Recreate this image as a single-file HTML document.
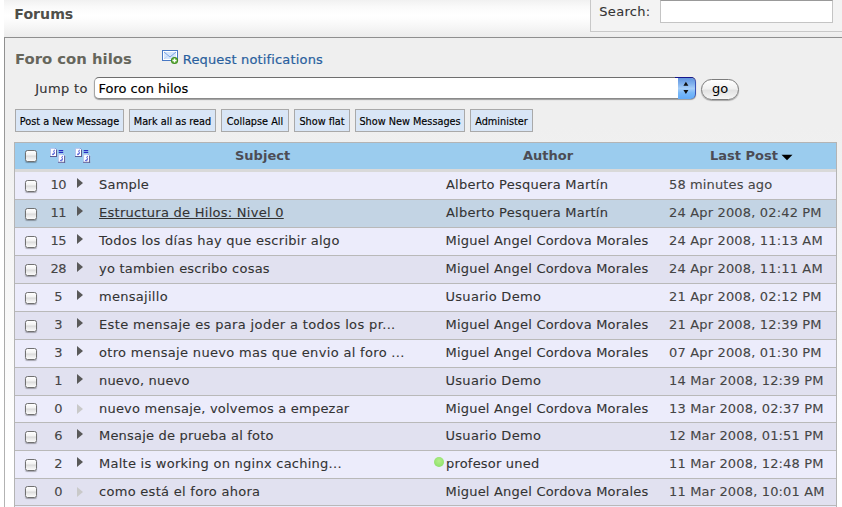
<!DOCTYPE html>
<html lang="en"><head><meta charset="utf-8"><title>Forums</title>
<style>
html,body{margin:0;padding:0}
body{width:842px;height:507px;overflow:hidden;background:#fff;position:relative;font-family:"DejaVu Sans","Liberation Sans",sans-serif;font-size:13px;color:#333;-webkit-text-stroke:.1px #333}
*{box-sizing:border-box}
.abs{position:absolute;white-space:nowrap;line-height:1}
#hdr{position:absolute;left:4px;top:0;width:838px;height:37px;background:linear-gradient(to bottom,#f1f1f1 0,#fafafa 7px,#fff 15px,#fefefe 18px,#f6f6f6 27px,#ececec 37px)}
#panel{position:absolute;left:5px;top:37px;width:900px;height:480px;background:linear-gradient(to bottom,#efefef 0,#efefef 90px,#fff 410px);border:1px solid #8f8f8f;border-left:0}#pl{position:absolute;left:4px;top:37px;width:1px;height:470px;background:linear-gradient(to bottom,#8f8f8f 0,#a6a6a6 230px,#b4b4b4 470px)}
#sbox{position:absolute;left:590px;top:-1px;width:260px;height:33px;background:#f3f3f3;border:1px solid #c8c8c8}
#sin{position:absolute;left:660px;top:0;width:173px;height:23px;background:#fff;border:1px solid #c4c4c4;border-top-color:#999}
.b{font-weight:bold;color:#4c4c55;-webkit-text-stroke:0}
.btn{position:absolute;top:109px;height:23px;background:#d9e6f6;border:1px solid #a9a9a9;font-family:"DejaVu Sans Condensed","DejaVu Sans","Liberation Sans",sans-serif;font-size:10.8px;color:#000;line-height:24px;-webkit-text-stroke:.15px #000;text-align:center;white-space:nowrap;word-spacing:0}
#sel{position:absolute;left:94px;top:77px;width:602px;height:22px;background:#fff;border:1px solid #a5a5a5;border-top-color:#6e6e6e;border-bottom-color:#8a8a8a;border-radius:5px;box-shadow:0 1px 1px rgba(0,0,0,.35)}
#sel .t{position:absolute;left:3.5px;top:3px;font-size:13px;color:#000;-webkit-text-stroke:.15px #000;line-height:15px;white-space:nowrap;word-spacing:0}
#sel .ar{position:absolute;right:-1px;top:-1px;width:21px;height:22px;border-top:1px solid #16168c;border-radius:0 5px 5px 0;overflow:hidden}#sel .ar i{position:absolute;right:0;top:-1px;width:18px;height:22px;background:linear-gradient(to bottom,#5c8fdb 0,#7fb0ec 30%,#a6cef8 52%,#78b8f8 72%,#62abf8 100%);border-right:1px solid #3a52b4;border-radius:0 5px 5px 0}
#go{-webkit-text-stroke:.05px #000;position:absolute;left:701px;top:79px;width:38px;height:21px;border:1px solid #7c7c7c;border-radius:11px;background:linear-gradient(to bottom,#fff 0,#f1f1f1 45%,#e2e2e2 55%,#f6f6f6 100%);box-shadow:0 1px 1px rgba(0,0,0,.3);font-size:13px;color:#000;text-align:center;line-height:17px}
#tbl{position:absolute;left:14px;top:142px;width:823px;height:380px;border:1px solid #b4b4b4;background:#b9b9b9}
#th{position:absolute;left:15px;top:143px;width:821px;height:26px;background:#9bccee}
#band{position:absolute;left:15px;top:169px;width:821px;height:3px;background:#d9d9d9}
.row{position:absolute;left:15px;width:821px;height:27px;white-space:nowrap}
.odd{background:#ececfb}.even{background:#e1e1f0}.sel{background:#c3d4e4}
.row span{position:absolute;top:5px;line-height:15px}
.n{left:28.3px;width:30px;text-align:center;letter-spacing:-.4px;color:#454545;-webkit-text-stroke-color:#454545}
.s{left:84px}.a{left:431px}.d{left:654px;color:#454545;-webkit-text-stroke-color:#454545}
.sl{color:#333;text-decoration:underline;text-decoration-thickness:1px;text-underline-offset:1.2px}
.cb{position:absolute;left:10px;top:7px;width:12px;height:12px;border:1px solid #717171;border-radius:2.5px;background:linear-gradient(to bottom,#fff 0,#f2f2f2 40%,#d9d9d9 50%,#e6e6e6 62%,#fbfbfb 100%);box-shadow:0 1px 1px rgba(0,0,0,.3)}
.row .cb{top:8px}
.short{height:26px}.short .cb{top:7px}.short span{top:4.5px}.short .tri{top:7.7px}
.tri{position:absolute;left:62px;top:5.7px;width:0;height:0;border-left:6.6px solid #595959;border-top:5.4px solid transparent;border-bottom:5.4px solid transparent}
.tri.off{border-left-color:#c9c9c9}
.dot{position:absolute;left:419px;top:6px;width:10px;height:10px;border-radius:5px;background:radial-gradient(circle at 50% 40%,#b4ee8c 0,#96e472 60%,#7fd862 100%)}
</style></head><body>
<div id="hdr"></div>
<div class="abs b" style="left:14.3px;top:5.8px;font-size:14.15px;line-height:16px;color:#4f4f4a">Forums</div>
<div id="sbox"></div>
<div class="abs" style="left:599.3px;top:4.3px;line-height:15px;letter-spacing:.3px">Search:</div>
<div id="sin"></div>
<div id="panel"></div><div id="pl"></div>
<div class="abs b" style="left:14.9px;top:49.6px;font-size:14.85px;line-height:18px;color:#66665c">Foro con hilos</div>
<svg class="abs" style="left:162px;top:50px" width="18" height="15" viewBox="0 0 18 15"><rect x=".5" y=".5" width="15" height="10" fill="#fff" stroke="#4878c4"/><rect x="2" y="2" width="12" height="7" fill="#d6e6fb"/><path d="M2 2 L8 7 L14 2" fill="none" stroke="#7aa2e4" stroke-width="1"/><path d="M2 9 L6 5.500 M14 9 L10 5.500" fill="none" stroke="#b4ccf2" stroke-width=".8"/><circle cx="12.500" cy="10.500" r="3.600" fill="#3e8f1e"/><circle cx="12.500" cy="10.500" r="2.500" fill="#62ad3e"/><path d="M12.500 8.500v4M10.500 10.500h4" stroke="#fff" stroke-width="1.300"/></svg>
<a class="abs" href="#" style="left:182.8px;top:51.6px;line-height:15px;color:#2a5f9e;text-decoration:none;letter-spacing:.16px;-webkit-text-stroke:.2px #2a5f9e">Request notifications</a>
<div class="abs" style="left:35.2px;top:81px;line-height:15px;letter-spacing:.33px">Jump to</div>
<div id="sel"><span class="t">Foro con hilos</span><span class="ar"><i></i><svg width="18" height="22" viewBox="0 0 18 22" style="position:absolute;left:3px;top:0"><path d="M5.4 7.8 L7.9 3.8 L10.4 7.8Z M5.4 12 L7.9 16 L10.4 12Z" fill="#111"/></svg></span></div>
<div id="go">go</div>
<div class="btn" style="left:15px;width:109px">Post a New Message</div>
<div class="btn" style="left:129px;width:87px">Mark all as read</div>
<div class="btn" style="left:221px;width:68px">Collapse All</div>
<div class="btn" style="left:294px;width:56px">Show flat</div>
<div class="btn" style="left:355px;width:110px">Show New Messages</div>
<div class="btn" style="left:470px;width:63px">Administer</div>
<div id="tbl"></div>
<div id="th"><i class="cb"></i></div>
<div id="band"></div>
<div class="abs b" style="left:235px;top:148px;font-size:13px;line-height:16px">Subject</div>
<div class="abs b" style="left:523px;top:148px;font-size:13px;line-height:16px">Author</div>
<div class="abs b" style="left:710px;top:148px;font-size:13px;line-height:16px">Last Post</div>
<svg class="abs" style="left:781px;top:154px" width="12" height="7" viewBox="0 0 12 7"><path d="M.5 .8 L11.5 .8 L6 6.3Z" fill="#000"/></svg>
<svg class="abs" style="left:50px;top:148px" width="16" height="16" viewBox="0 0 16 16"><g><rect x="0" y="0" width="7" height="9" fill="#fff"/><rect x="0" y="0" width="1" height="9" fill="#b4c4ee"/><rect x="0" y="0" width="5.500" height=".9" fill="#b4c4ee"/><path d="M5 0L7 2V0Z" fill="#9bccee"/><path d="M5 0L7 2" stroke="#7f92d8" stroke-width=".8"/><rect x="6" y="1.800" width="1" height="7.2" fill="#5a5a92"/><rect x="0" y="8.0" width="7" height="1" fill="#5a5a92"/><path d="M4.700 2.100C3.500 2.300 3.500 3.500 4.300 4.300C4.600 5.600 3.900 6.800 2.800 6.800C2.100 6.300 2.700 5.300 3.600 5.400" fill="none" stroke="#3644d4" stroke-width="1"/></g><path d="M8.700 2.500h4.500M8.700 4.400h4.500" stroke="#2a2cc4" stroke-width="1.200"/><g transform="translate(8.100 6.200)"><rect x="0" y="0" width="7" height="8.6" fill="#fff"/><rect x="0" y="0" width="1" height="8.6" fill="#b4c4ee"/><rect x="0" y="0" width="5.500" height=".9" fill="#b4c4ee"/><path d="M5 0L7 2V0Z" fill="#9bccee"/><path d="M5 0L7 2" stroke="#7f92d8" stroke-width=".8"/><rect x="6" y="1.800" width="1" height="6.8" fill="#5a5a92"/><rect x="0" y="7.6" width="7" height="1" fill="#5a5a92"/><path d="M4.700 2.100C3.500 2.300 3.500 3.500 4.300 4.300C4.600 5.600 3.900 6.800 2.800 6.800C2.100 6.300 2.700 5.300 3.600 5.400" fill="none" stroke="#3644d4" stroke-width="1"/></g></svg><svg class="abs" style="left:75px;top:148px" width="16" height="16" viewBox="0 0 16 16"><g><rect x="0" y="0" width="7" height="9" fill="#fff"/><rect x="0" y="0" width="1" height="9" fill="#b4c4ee"/><rect x="0" y="0" width="5.500" height=".9" fill="#b4c4ee"/><path d="M5 0L7 2V0Z" fill="#9bccee"/><path d="M5 0L7 2" stroke="#7f92d8" stroke-width=".8"/><rect x="6" y="1.800" width="1" height="7.2" fill="#5a5a92"/><rect x="0" y="8.0" width="7" height="1" fill="#5a5a92"/><path d="M4.700 2.100C3.500 2.300 3.500 3.500 4.300 4.300C4.600 5.600 3.900 6.800 2.800 6.800C2.100 6.300 2.700 5.300 3.600 5.400" fill="none" stroke="#3644d4" stroke-width="1"/></g><path d="M8.700 2.500h4.500M8.700 4.400h4.500" stroke="#2a2cc4" stroke-width="1.200"/><g transform="translate(8.100 6.200)"><rect x="0" y="0" width="7" height="8.6" fill="#fff"/><rect x="0" y="0" width="1" height="8.6" fill="#b4c4ee"/><rect x="0" y="0" width="5.500" height=".9" fill="#b4c4ee"/><path d="M5 0L7 2V0Z" fill="#9bccee"/><path d="M5 0L7 2" stroke="#7f92d8" stroke-width=".8"/><rect x="6" y="1.800" width="1" height="6.8" fill="#5a5a92"/><rect x="0" y="7.6" width="7" height="1" fill="#5a5a92"/><path d="M4.700 2.100C3.500 2.300 3.500 3.500 4.300 4.300C4.600 5.600 3.900 6.800 2.800 6.800C2.100 6.300 2.700 5.300 3.600 5.400" fill="none" stroke="#3644d4" stroke-width="1"/></g></svg>
<div class="row odd" style="top:172px"><i class="cb"></i><span class="n">10</span><i class="tri"></i><span class="s" style="left:84.00px;letter-spacing:0.224px">Sample</span><span class="a" style="left:431.00px;letter-spacing:0.229px">Alberto Pesquera Martín</span><span class="d" style="left:654.00px;letter-spacing:0.123px">58 minutes ago</span></div>
<div class="row sel" style="top:200px"><i class="cb"></i><span class="n">11</span><i class="tri"></i><span class="s" style="left:84.00px;letter-spacing:0.267px"><a class="sl" href="#">Estructura de Hilos: Nivel 0</a></span><span class="a" style="left:431.00px;letter-spacing:0.229px">Alberto Pesquera Martín</span><span class="d" style="left:654.00px;letter-spacing:0.164px">24 Apr 2008, 02:42 PM</span></div>
<div class="row odd" style="top:228px"><i class="cb"></i><span class="n">15</span><i class="tri"></i><span class="s" style="left:84.00px;letter-spacing:0.277px">Todos los días hay que escribir algo</span><span class="a" style="left:430.50px;letter-spacing:0.207px">Miguel Angel Cordova Morales</span><span class="d" style="left:654.00px;letter-spacing:0.164px">24 Apr 2008, 11:13 AM</span></div>
<div class="row even" style="top:256px"><i class="cb"></i><span class="n">28</span><i class="tri"></i><span class="s" style="left:84.00px;letter-spacing:0.219px">yo tambien escribo cosas</span><span class="a" style="left:430.50px;letter-spacing:0.207px">Miguel Angel Cordova Morales</span><span class="d" style="left:654.00px;letter-spacing:0.164px">24 Apr 2008, 11:11 AM</span></div>
<div class="row odd" style="top:284px"><i class="cb"></i><span class="n">5</span><i class="tri"></i><span class="s" style="left:84.00px;letter-spacing:0.284px">mensajillo</span><span class="a" style="left:430.50px;letter-spacing:0.291px">Usuario Demo</span><span class="d" style="left:654.00px;letter-spacing:0.164px">21 Apr 2008, 02:12 PM</span></div>
<div class="row even" style="top:312px"><i class="cb"></i><span class="n">3</span><i class="tri"></i><span class="s" style="left:84.00px;letter-spacing:0.355px">Este mensaje es para joder a todos los pr...</span><span class="a" style="left:430.50px;letter-spacing:0.207px">Miguel Angel Cordova Morales</span><span class="d" style="left:654.00px;letter-spacing:0.164px">21 Apr 2008, 12:39 PM</span></div>
<div class="row odd" style="top:340px"><i class="cb"></i><span class="n">3</span><i class="tri"></i><span class="s" style="left:84.00px;letter-spacing:0.326px">otro mensaje nuevo mas que envio al foro ...</span><span class="a" style="left:430.50px;letter-spacing:0.207px">Miguel Angel Cordova Morales</span><span class="d" style="left:654.00px;letter-spacing:0.164px">07 Apr 2008, 01:30 PM</span></div>
<div class="row even" style="top:368px"><i class="cb"></i><span class="n">1</span><i class="tri"></i><span class="s" style="left:84.00px;letter-spacing:0.175px">nuevo, nuevo</span><span class="a" style="left:430.50px;letter-spacing:0.291px">Usuario Demo</span><span class="d" style="left:654.00px;letter-spacing:0.156px">14 Mar 2008, 12:39 PM</span></div>
<div class="row odd short" style="top:396px"><i class="cb"></i><span class="n">0</span><i class="tri off"></i><span class="s" style="left:84.00px;letter-spacing:0.212px">nuevo mensaje, volvemos a empezar</span><span class="a" style="left:430.50px;letter-spacing:0.207px">Miguel Angel Cordova Morales</span><span class="d" style="left:654.00px;letter-spacing:0.156px">13 Mar 2008, 02:37 PM</span></div>
<div class="row even" style="top:423px"><i class="cb"></i><span class="n">6</span><i class="tri"></i><span class="s" style="left:84.00px;letter-spacing:0.193px">Mensaje de prueba al foto</span><span class="a" style="left:430.50px;letter-spacing:0.291px">Usuario Demo</span><span class="d" style="left:654.00px;letter-spacing:0.156px">12 Mar 2008, 01:51 PM</span></div>
<div class="row odd" style="top:451px"><i class="cb"></i><span class="n">2</span><i class="tri"></i><span class="s" style="left:84.00px;letter-spacing:0.251px">Malte is working on nginx caching...</span><i class="dot"></i><span class="a" style="left:431.00px;letter-spacing:0.200px">profesor uned</span><span class="d" style="left:654.00px;letter-spacing:0.156px">11 Mar 2008, 12:48 PM</span></div>
<div class="row even short" style="top:479px"><i class="cb"></i><span class="n">0</span><i class="tri off"></i><span class="s" style="left:84.00px;letter-spacing:0.287px">como está el foro ahora</span><span class="a" style="left:430.50px;letter-spacing:0.207px">Miguel Angel Cordova Morales</span><span class="d" style="left:654.00px;letter-spacing:0.156px">11 Mar 2008, 10:01 AM</span></div>
<div class="row odd" style="top:506px"></div>
</body></html>
